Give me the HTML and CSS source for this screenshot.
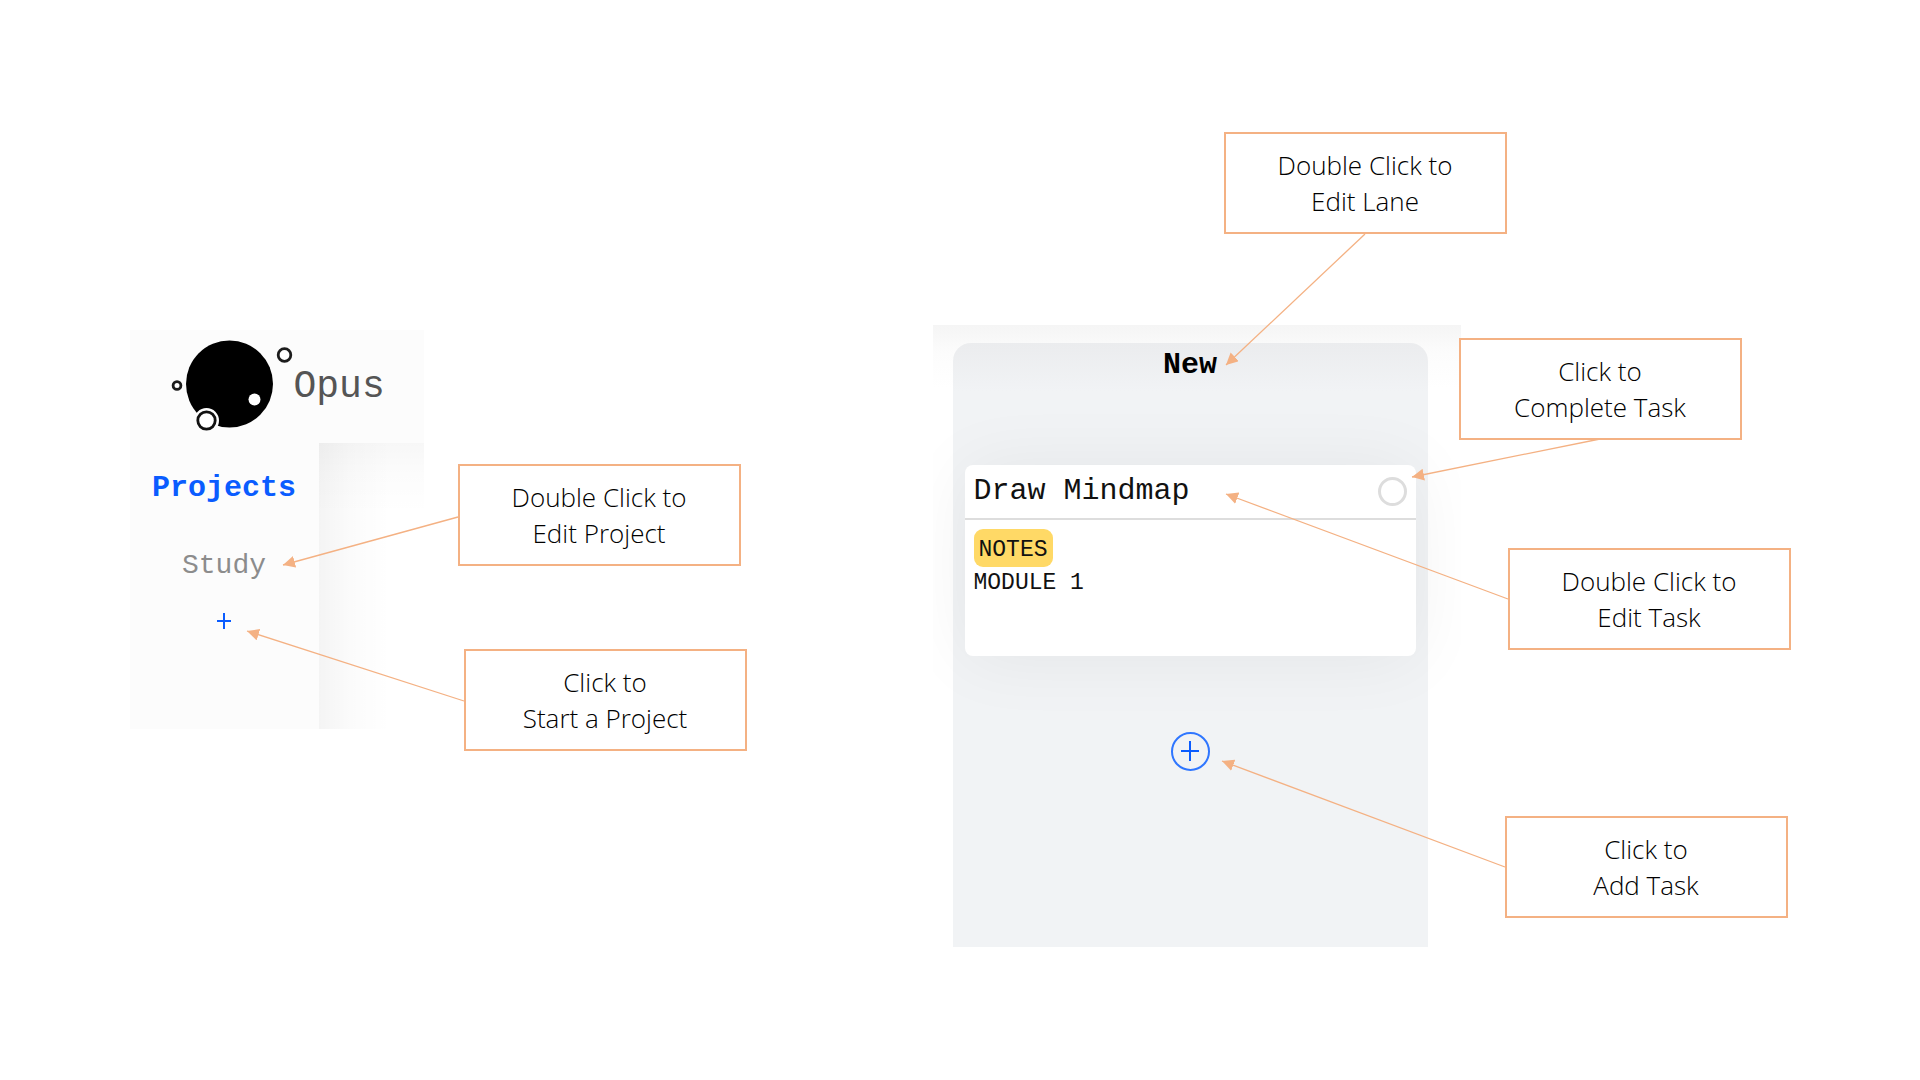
FILE: index.html
```html
<!DOCTYPE html>
<html lang="en">
<head>
<meta charset="utf-8">
<meta name="viewport" content="width=device-width, initial-scale=1">
<title>Opus guide</title>
<link rel="stylesheet" href="styles.css">
</head>
<body>
<main class="guide">
  <section class="figure figure-projects">
    <div class="app">
      <header class="app-header">
        <svg class="logo" viewBox="0 4 130 100" aria-hidden="true">
          <circle cx="59.5" cy="52" r="43.5"/>
          <circle cx="36.5" cy="88.5" r="12.5" fill="#fcfcfc"/>
          <circle cx="36.5" cy="88.5" r="8.7" fill="#fff" stroke="#111" stroke-width="2.8"/>
          <circle cx="84.5" cy="67.5" r="6" fill="#fff"/>
          <circle cx="114.5" cy="23" r="6.3" fill="#fff" stroke="#1c1c1c" stroke-width="2.8"/>
          <circle cx="7" cy="53.5" r="3.9" fill="#fff" stroke="#1c1c1c" stroke-width="2.8"/>
        </svg>
        <span class="brand">Opus</span>
      </header>
      <div class="app-body">
        <nav class="sidebar">
          <h2 class="sidebar-title">Projects</h2>
          <a class="project" href="#study">Study</a>
          <button class="add-project" type="button" aria-label="Add project">
            <svg width="16" height="18" viewBox="0 0 16 18"><path d="M1 9H15M8 1V17"/></svg>
          </button>
        </nav>
        <div class="content"></div>
      </div>
    </div>
    <svg class="arrows" aria-hidden="true">
      <defs>
        <marker id="head" viewBox="0 0 12 12" refX="12" refY="6" markerWidth="12" markerHeight="12" markerUnits="userSpaceOnUse" orient="auto"><path d="M0 0L12 6L0 12Z"/></marker>
      </defs>
      <path class="arrow" d="M328 187L153 235"/>
      <path class="arrow" d="M334 371L117 301"/>
    </svg>
    <p class="callout edit-project">Double Click to<br>Edit Project</p>
    <p class="callout start-project">Click to<br>Start a Project</p>
  </section>

  <section class="figure figure-lane">
    <div class="board">
      <div class="lane">
        <h2 class="lane-title">New</h2>
        <article class="card">
          <header class="card-header">
            <h3 class="card-title">Draw Mindmap</h3>
            <input class="done" type="checkbox" aria-label="Complete Draw Mindmap">
          </header>
          <div class="card-body">
            <span class="tag">NOTES</span>
            <p class="note">MODULE 1</p>
          </div>
        </article>
        <button class="add-task" type="button" aria-label="Add task">
          <svg width="20" height="22" viewBox="0 0 20 22"><path d="M1 11H19M10 1V21"/></svg>
        </button>
      </div>
    </div>
    <svg class="arrows" aria-hidden="true">
      <path class="arrow" d="M432 102L293 233"/>
      <path class="arrow" d="M667 307L479 345"/>
      <path class="arrow" d="M575 467L293 362"/>
      <path class="arrow" d="M572 735L289 629"/>
    </svg>
    <p class="callout edit-lane">Double Click to<br>Edit Lane</p>
    <p class="callout complete-task">Click to<br>Complete Task</p>
    <p class="callout edit-task">Double Click to<br>Edit Task</p>
    <p class="callout new-task">Click to<br>Add Task</p>
  </section>
</main>
</body>
</html>
```
FILE: styles.css
```css
* {
  box-sizing: border-box;
}

body {
  margin: 0;
  background: #fff;
  color: #111;
  font-family: "Courier New", "Liberation Mono", monospace;
}

h2,
h3,
p {
  margin: 0;
}

button {
  padding: 0;
  border: 0;
  background: none;
  color: #0a5cff;
  cursor: pointer;
}

button svg {
  display: block;
  fill: none;
  stroke: currentColor;
  stroke-width: 2;
}

.guide {
  display: flex;
  justify-content: center;
  align-items: center;
  gap: 186px;
  min-height: 100vh;
}

.figure {
  position: relative;
  flex: none;
}

.figure-projects {
  padding-right: 323px;
  padding-bottom: 22px;
}

.figure-lane {
  padding-top: 193px;
  padding-right: 330px;
  padding-bottom: 2px;
}

/* Project list */
.app {
  width: 294px;
  background: #fff;
}

.app-header {
  display: flex;
  align-items: center;
  gap: 2px;
  height: 113px;
  padding-left: 40px;
  background: #fcfcfc;
}

.logo {
  width: 130px;
  height: 100px;
  margin-right: -8px;
}

.brand {
  color: #555;
  font-size: 38px;
}

.app-body {
  display: flex;
  height: 286px;
}

.sidebar {
  display: flex;
  flex-direction: column;
  align-items: center;
  width: 189px;
  padding-top: 28px;
  background: #fcfcfc;
}

.sidebar-title {
  color: #0a5cff;
  font-size: 30px;
  line-height: 34px;
}

.project {
  margin-top: 44px;
  color: #8c8c8c;
  font-size: 28px;
  line-height: 34px;
  text-decoration: none;
}

.add-project {
  margin-top: 29px;
}

.content {
  flex: 1;
  background:
    linear-gradient(to right, rgba(0, 0, 0, 0.045), rgba(0, 0, 0, 0.015) 32px, transparent 72px),
    linear-gradient(to bottom, rgba(0, 0, 0, 0.03), rgba(0, 0, 0, 0.01) 32px, transparent 72px);
}

/* Lane */
.board {
  width: 528px;
  padding: 18px 33px 0 20px;
  overflow: hidden;
  background: linear-gradient(to bottom, #f5f5f5, #fcfcfc 28px, #fff 64px);
}

.lane {
  display: flex;
  flex-direction: column;
  align-items: center;
  height: 604px;
  padding: 5px 12px;
  border-radius: 18px 18px 0 0;
  background: linear-gradient(to bottom, #ebecee, #f1f3f5 48px);
}

.lane-title {
  color: #000;
  font-size: 30px;
  line-height: 34px;
}

.card {
  align-self: stretch;
  height: 191px;
  margin-top: 83px;
  border-radius: 8px;
  background: #fff;
  box-shadow: 0 2px 72px rgba(0, 0, 20, 0.06);
}

.card-header {
  display: flex;
  justify-content: space-between;
  align-items: center;
  height: 55px;
  padding: 0 9px;
  border-bottom: 2px solid #ddd;
}

.card-title {
  font-size: 30px;
  font-weight: 400;
  line-height: 34px;
}

.done {
  appearance: none;
  width: 29px;
  height: 29px;
  margin: 0;
  border: 3px solid #ddd;
  border-radius: 50%;
  background: #fff;
}

.card-body {
  display: flex;
  flex-direction: column;
  align-items: flex-start;
  padding: 9px;
  font-size: 23px;
  line-height: 30px;
}

.tag {
  padding: 6px 5px 2px;
  border-radius: 9px;
  background: #ffd966;
}

.note {
  padding-top: 1px;
}

.add-task {
  display: grid;
  place-items: center;
  width: 39px;
  height: 39px;
  margin-top: 76px;
  border: 2px solid #2f76ff;
  border-radius: 50%;
}

/* Callouts pinned over the figures */
.callout {
  position: absolute;
  display: grid;
  place-content: center;
  width: 283px;
  height: 102px;
  border: 2px solid #f4b183;
  background: #fff;
  color: #000;
  font-family: "Open Sans", "Noto Sans", sans-serif;
  font-size: 26px;
  font-weight: 300;
  line-height: 36px;
  text-align: center;
}

.edit-project {
  left: 328px;
  top: 134px;
}

.start-project {
  left: 334px;
  top: 319px;
}

.edit-lane {
  left: 291px;
  top: 0;
}

.complete-task {
  left: 526px;
  top: 206px;
}

.edit-task {
  left: 575px;
  top: 416px;
}

.new-task {
  left: 572px;
  top: 684px;
}

.arrows {
  position: absolute;
  inset: 0;
  width: 100%;
  height: 100%;
  pointer-events: none;
}

.arrow {
  fill: none;
  stroke: #f4b183;
  stroke-width: 1.3;
  marker-end: url(#head);
}

#head {
  fill: #f4b183;
}
```
